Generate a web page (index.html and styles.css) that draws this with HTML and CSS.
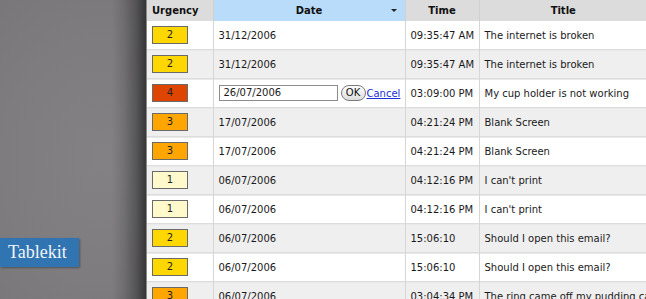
FILE: index.html
```html
<!DOCTYPE html>
<html>
<head>
<meta charset="utf-8">
<link rel="stylesheet" href="styles.css">
</head>
<body>
<div class="page">
  <div class="side">
    <div class="brand">Tablekit</div>
  </div>
  <div class="panel">
    <table class="grid">
      <colgroup>
        <col class="c-urg"><col class="c-date"><col class="c-time"><col class="c-title">
      </colgroup>
      <thead>
        <tr>
          <th class="h-urg">Urgency</th>
          <th class="h-date sorted">Date<span class="arrow"></span></th>
          <th>Time</th>
          <th>Title</th>
        </tr>
      </thead>
      <tbody>
        <tr><td><span class="badge u2">2</span></td><td>31/12/2006</td><td>09:35:47 AM</td><td>The internet is broken</td></tr>
        <tr class="alt"><td><span class="badge u2">2</span></td><td>31/12/2006</td><td>09:35:47 AM</td><td>The internet is broken</td></tr>
        <tr><td><span class="badge u4">4</span></td><td class="editing"><span class="field">26/07/2006</span><span class="ok">OK</span><a class="cancel" href="#">Cancel</a></td><td>03:09:00 PM</td><td>My cup holder is not working</td></tr>
        <tr class="alt"><td><span class="badge u3">3</span></td><td>17/07/2006</td><td>04:21:24 PM</td><td>Blank Screen</td></tr>
        <tr><td><span class="badge u3">3</span></td><td>17/07/2006</td><td>04:21:24 PM</td><td>Blank Screen</td></tr>
        <tr class="alt"><td><span class="badge u1">1</span></td><td>06/07/2006</td><td>04:12:16 PM</td><td>I can't print</td></tr>
        <tr><td><span class="badge u1">1</span></td><td>06/07/2006</td><td>04:12:16 PM</td><td>I can't print</td></tr>
        <tr class="alt"><td><span class="badge u2">2</span></td><td>06/07/2006</td><td>15:06:10</td><td>Should I open this email?</td></tr>
        <tr><td><span class="badge u2">2</span></td><td>06/07/2006</td><td>15:06:10</td><td>Should I open this email?</td></tr>
        <tr class="alt"><td><span class="badge u3">3</span></td><td>06/07/2006</td><td>03:04:34 PM</td><td>The ring came off my pudding can</td></tr>
      </tbody>
    </table>
  </div>
</div>
</body>
</html>
```

FILE: styles.css
```css
html, body {
  margin: 0;
  padding: 0;
  height: 100%;
  overflow: hidden;
}
body {
  background: #7c7a7d;
  font-family: "DejaVu Sans", Verdana, sans-serif;
}
.page {
  display: flex;
  width: 646px;
  height: 299px;
  overflow: hidden;
  background:
    linear-gradient(90deg, rgba(0,0,0,0) 0, rgba(0,0,0,0) 112px, rgba(0,0,0,0.12) 124px, rgba(0,0,0,0.32) 136px, rgba(0,0,0,0.55) 145px),
    radial-gradient(ellipse 160px 200px at 100px 160px, #838184 0%, #7e7c7f 60%, #79777a 100%);
}
.side {
  width: 146px;
  flex: none;
  padding-top: 238px;
  box-sizing: border-box;
}
.brand {
  width: 79px;
  height: 29px;
  box-sizing: border-box;
  background: #3174b2;
  color: #f2f4f8;
  font-family: "Liberation Serif", Georgia, serif;
  font-size: 18px;
  line-height: 29px;
  padding-left: 8px;
  box-shadow: 1px 1px 2px rgba(0,0,0,0.35);
}
.panel {
  flex: none;
  width: 500px;
  background: #fff;
  border-left: 1px solid #8a8a8a;
}
.grid {
  border-collapse: collapse;
  table-layout: fixed;
  width: 500px;
  font-size: 10px;
  color: #1a1a1a;
}
.c-urg { width: 66px; }
.c-date { width: 192px; }
.c-time { width: 74px; }
.c-title { width: 168px; }
.grid th {
  height: 21px;
  padding: 0;
  background: #dcdcdc;
  font-weight: bold;
  font-size: 10px;
  text-align: center;
  border-left: 1px solid #d0d0d0;
  color: #111;
}
.grid th.h-urg {
  text-align: left;
  padding-left: 5px;
  border-left: none;
}
.grid th.sorted {
  background: #b9dcfa;
  position: relative;
}
.arrow {
  position: absolute;
  right: 8px;
  top: 9px;
  width: 0;
  height: 0;
  border-left: 3px solid transparent;
  border-right: 3px solid transparent;
  border-top: 3px solid #222;
}
.grid td {
  height: 28px;
  padding: 0 0 0 5px;
  border-top: 1px solid #dddddd;
  border-left: 1px solid #d6d6d6;
  box-shadow: inset 0 1px 0 #e9e9e9;
  white-space: nowrap;
  overflow: hidden;
}
.grid td:first-child {
  border-left: none;
}
.grid tbody tr:first-child td {
  border-top: none;
  box-shadow: none;
  height: 28px;
}
.grid tr.alt td {
  background: #efefef;
}
.badge {
  display: block;
  width: 34px;
  height: 16px;
  border: 1px solid #6a6a6a;
  text-align: center;
  line-height: 16px;
  font-size: 10px;
  color: #222;
}
.u1 { background: #fff9cc; }
.u2 { background: #ffd700; }
.u3 { background: #ffa500; }
.u4 { background: #de4500; }
.editing {
  padding-left: 7px;
}
.field {
  display: inline-block;
  vertical-align: middle;
  height: 14px;
  line-height: 14px;
  border: 1px solid #8c8c8c;
  background: #fff;
  padding-left: 4px;
  box-sizing: content-box;
  margin-right: 3px;
  width: 113px;
}
.ok {
  display: inline-block;
  vertical-align: middle;
  width: 23px;
  height: 14px;
  line-height: 14px;
  border: 1px solid #7a7a7a;
  border-radius: 8px;
  background: linear-gradient(#fefefe, #dcdcdc);
  text-align: center;
  font-size: 10px;
  color: #111;
}
.cancel {
  display: inline-block;
  vertical-align: middle;
  color: #1a2fd6;
  text-decoration: underline;
  margin-left: 1px;
}
```
